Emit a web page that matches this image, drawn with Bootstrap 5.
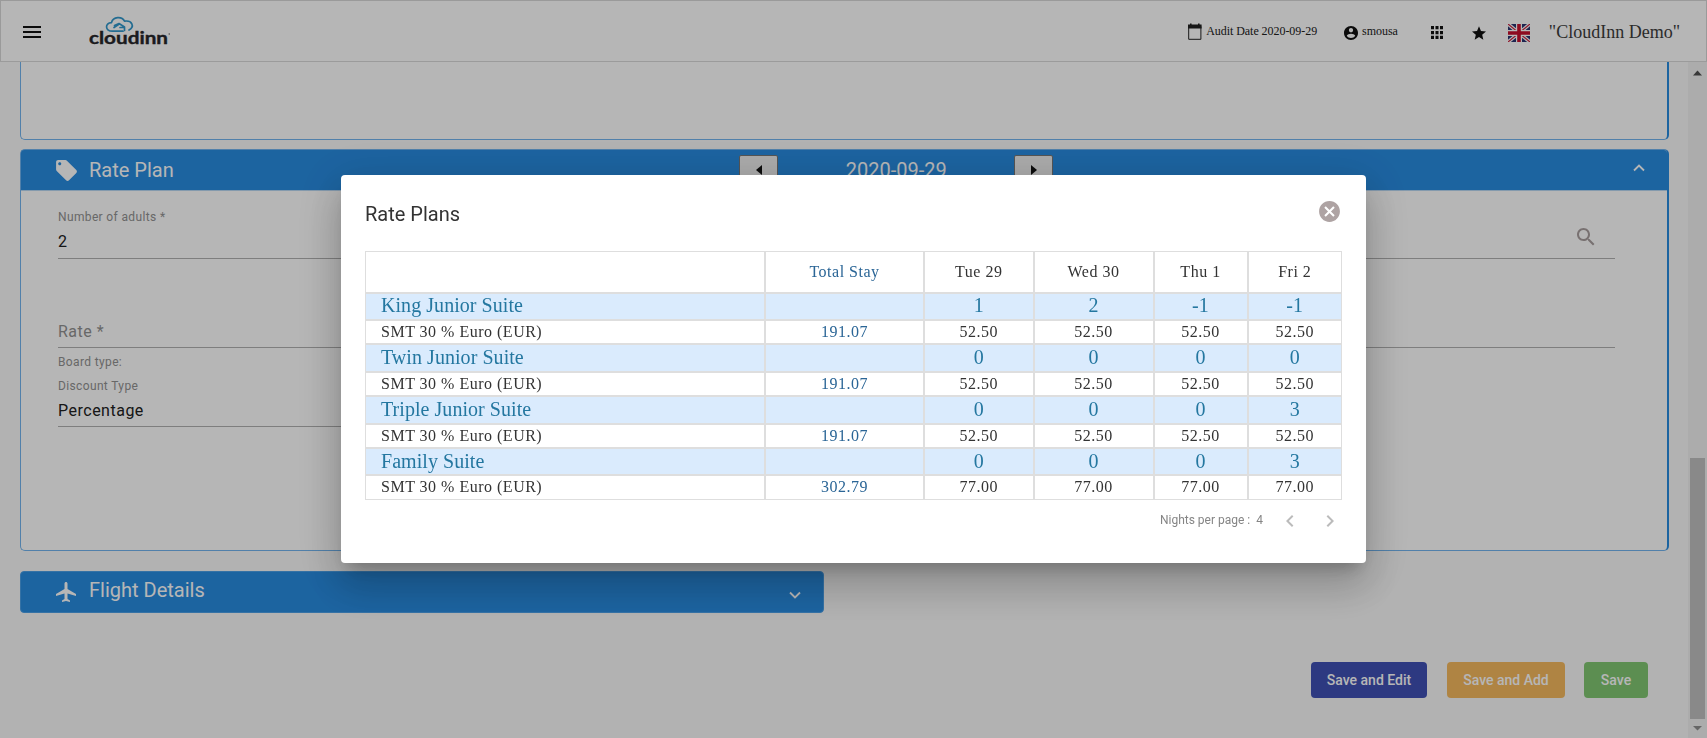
<!DOCTYPE html>
<html lang="en">
<head>
<meta charset="utf-8">
<meta name="viewport" content="width=device-width, initial-scale=1">
<title>CloudInn - Reservation</title>
<link href="https://cdn.jsdelivr.net/npm/bootstrap@5.3.0/dist/css/bootstrap.min.css" rel="stylesheet">
<style>
  body { height: 100vh; overflow: hidden; background: #fafafa; font-family: Roboto, sans-serif; color: #212121; line-height: 1.2; }
  .serif { font-family: "Liberation Serif", serif; }
  svg { display: block; flex: none; }

  .topbar { height: 62px; border: 1px solid #d8d8d8; border-bottom-color: #dadada; background: #fff; padding: 0 26px 0 19px; }
  .audit-text { font-size: 12px; letter-spacing: -.05px; }
  .hotel-name { font-size: 18px; color: #3c3c3c; padding-top: 3px; }

  .page-area { padding: 0 19px 0 20px; min-width: 0; }
  .panel { border: 1px solid #72b4ee; border-right: 2px solid #288ce1; border-radius: 5px; background: #fff; width: 1649px; }
  .panel-prev { height: 78px; border-top: 0; border-radius: 0 0 5px 5px; }
  .panel-rate { height: 402px; margin-top: 9px; }
  .panel-bar { height: 41px; background: #288ce1; color: #fff; font-size: 20px; padding: 0 20px 0 33px; border-radius: 3px 3px 0 0; border-bottom: 1px solid #b9d8f3; }
  .panel-flight { width: 804px; height: 42px; margin-top: 20px; border-radius: 4px; border: 1px solid #4ba0e8; padding: 0 16px 2px 33px; }
  .step-btn { width: 39px; height: 29px; border: 1px solid #777; border-radius: 2px; background: #efefef; padding: 0; }
  .day-label { width: 236px; }

  .fields { padding: 0 52px 0 37px; }
  .field-line { border-bottom: 1px solid #b1b1b1; }
  .cap { font-size: 12px; color: #929292; letter-spacing: .36px; line-height: 16px; }
  .val { font-size: 16px; line-height: 20px; letter-spacing: .5px; }

  .act { height: 36px; border: 0; border-radius: 4px; font-size: 14px; font-weight: 500; padding: 0; color: #fff; }
  .act-edit { width: 116px; background: #3f51b5; }
  .act-add { width: 118px; background: #f5b95f; }
  .act-save { width: 64px; background: #82c772; margin-left: -1px; }

  .rail { width: 19px; background: #f1f1f1; padding: 8px 2px 7px; }
  .rail-thumb { width: 15px; height: 261px; background: #c1c1c1; margin-bottom: 7px; }

  .shade { background: #000; --bs-backdrop-opacity: .288; }
  .dialog { width: 1025px; max-width: 1025px; margin: 0 0 0 341px; }
  .dialog-box { height: 388px; border: 0; border-radius: 4px; padding: 24px; box-shadow: 0 11px 15px -7px rgba(0,0,0,.2), 0 24px 38px 3px rgba(0,0,0,.14), 0 9px 46px 8px rgba(0,0,0,.12); }
  .dialog-title { font-size: 20px; line-height: 30px; color: #333; }
  .rates { width: 977px; table-layout: fixed; border-collapse: separate; border-spacing: 0; letter-spacing: .5px; color: #333; font-size: 16px; margin-top: 20px; }
  .rates td, .rates th { border: 1px solid #dedede; padding: 0; text-align: center; font-weight: 400; line-height: 20px; }
  .rates td:first-child { text-align: left; padding-left: 15px; }
  .rates thead tr { height: 41.5px; }
  .rates .suite { height: 27.5px; background: #daebfd; color: #2477a0; font-size: 20px; letter-spacing: .05px; }
  .rates .suite td { padding-bottom: 2px; }
  .rates .plan { height: 24.25px; }
  .rates .total { color: #2a6596; }
  .pager { font-size: 12px; color: #858585; margin-top: 9px; }
</style>
</head>
<body class="d-flex flex-column">

<nav class="topbar d-flex align-items-center justify-content-between flex-shrink-0">
  <div class="d-flex align-items-center">
    <svg style="margin-top:2px" width="24" height="24" viewBox="0 0 24 24" fill="#111"><path d="M3 18h18v-2H3v2zm0-5h18v-2H3v2zm0-7v2h18V6H3z"/></svg>
    <svg style="margin-left:45px" width="84" height="36" viewBox="0 -2 84 36">
      <g fill="none" stroke="#3198cc" stroke-width="1.7" stroke-linecap="round" stroke-linejoin="round">
        <path d="M34 16.200H23.500C16 16.200 15.500 7.800 22.500 7.600C24 1.500 33 1 35.500 6.200C43 5 46 11.500 40 15"/>
        <path d="M25.500 10.500L30 8.500L35.500 12V15.500M25 12.500L29.500 9.500M31 12.500H34"/>
      </g>
      <text x="0" y="28.700" textLength="79" lengthAdjust="spacingAndGlyphs" font-family="Lato, sans-serif" font-size="16.500" font-weight="700" fill="#26262a" stroke="#26262a" stroke-width=".35">cloudinn</text>
      <circle cx="80.200" cy="19" r=".7" fill="#555"/>
    </svg>
  </div>
  <div class="d-flex align-items-center serif">
    <svg width="16" height="18" viewBox="0 0 16 18" style="margin-top:2px"><path d="M1.700 3.500h12.200v12.800h-12.200z" fill="none" stroke="#222" stroke-width="1"/><path d="M1 1.500h13.600v4H1zM3 .5h1.600V3H3zM11 .5h1.600V3H11z" fill="#222"/></svg>
    <span class="audit-text" style="margin-left:3px">Audit Date 2020-09-29</span>
    <svg style="margin:3px 0 0 27px" width="14" height="14" viewBox="2 2 20 20" fill="#111"><path d="M12 2C6.480 2 2 6.480 2 12s4.480 10 10 10 10-4.480 10-10S17.520 2 12 2zm0 3c1.660 0 3 1.340 3 3s-1.340 3-3 3-3-1.340-3-3 1.340-3 3-3zm0 14.200c-2.500 0-4.710-1.280-6-3.220.03-1.990 4-3.080 6-3.080 1.990 0 5.970 1.090 6 3.080-1.290 1.940-3.500 3.220-6 3.220z"/></svg>
    <span class="audit-text" style="margin-left:4px">smousa</span>
    <svg style="margin:3px 0 0 33px" width="12" height="13" viewBox="0 0 12 12" preserveAspectRatio="none" fill="#111"><path d="M0 0h3v3H0zM4.500 0h3v3h-3zM9 0h3v3H9zM0 4.500h3v3H0zM4.500 4.500h3v3h-3zM9 4.500h3v3H9zM0 9h3v3H0zM4.500 9h3v3h-3zM9 9h3v3H9z"/></svg>
    <svg style="margin:3px 0 0 29px" width="14" height="14" viewBox="2 2 20 19" fill="#111"><path d="M12 17.270L18.180 21l-1.640-7.030L22 9.240l-7.190-.61L12 2 9.190 8.630 2 9.240l5.460 4.730L5.820 21z"/></svg>
    <svg style="margin:3px 0 0 22px" width="22" height="18" viewBox="0 0 22 18">
      <path fill="#2a3570" d="M0 0h22v18H0z"/>
      <path d="M0 0l22 18M22 0L0 18" stroke="#fff" stroke-width="3.600"/>
      <path d="M0 0l22 18M22 0L0 18" stroke="#c8203c" stroke-width="1.200"/>
      <path d="M11 0v18M0 9h22" stroke="#fff" stroke-width="6"/>
      <path d="M11 0v18M0 9h22" stroke="#c8102e" stroke-width="3.600"/>
    </svg>
    <span class="hotel-name" style="margin-left:19px">"CloudInn Demo"</span>
  </div>
</nav>

<div class="d-flex flex-grow-1 overflow-hidden">
  <main class="page-area flex-grow-1">
    <section class="panel panel-prev"></section>

    <section class="panel panel-rate">
      <div class="panel-bar d-flex align-items-center justify-content-between">
        <div class="d-flex align-items-center">
          <svg width="25" height="25" viewBox="0 0 24 24" fill="#fff"><path d="M21.410 11.580l-9-9C12.050 2.220 11.550 2 11 2H4c-1.100 0-2 .9-2 2v7c0 .55.220 1.050.590 1.420l9 9c.360.360.860.580 1.410.580s1.050-.220 1.410-.590l7-7c.370-.360.590-.860.590-1.410s-.230-1.060-.590-1.420zM5.500 7C4.670 7 4 6.330 4 5.500S4.670 4 5.500 4 7 4.670 7 5.500 6.330 7 5.500 7z"/></svg>
          <span style="margin-left:10px">Rate Plan</span>
        </div>
        <div class="d-flex align-items-center" style="margin:-1px 0 0 -12px">
          <button class="step-btn d-flex align-items-center justify-content-center"><svg width="6" height="10" viewBox="0 0 6 10"><path d="M6 0v10L0 5z" fill="#111"/></svg></button>
          <span class="day-label text-center">2020-09-29</span>
          <button class="step-btn d-flex align-items-center justify-content-center"><svg width="6" height="10" viewBox="0 0 6 10"><path d="M0 0v10l6-5z" fill="#111"/></svg></button>
        </div>
        <svg width="16" height="12" viewBox="0 0 16 12"><path d="M3 6.500L8 1.500l5 5" fill="none" stroke="#fff" stroke-width="1.800"/></svg>
      </div>
      <div class="fields">
        <div class="row gx-5">
          <div class="col-6"><div class="field-line" style="padding-top:18px;height:68px">
            <div class="cap">Number of adults *</div>
            <div class="val" style="margin-top:7px">2</div>
          </div></div>
          <div class="col-6"><div class="field-line d-flex justify-content-end" style="padding:34px 17px 0 0;height:68px">
            <svg width="24" height="24" viewBox="0 0 24 24" fill="#a99f9f"><path d="M15.500 14h-.79l-.28-.27C15.410 12.590 16 11.110 16 9.500 16 5.910 13.090 3 9.500 3S3 5.910 3 9.500 5.910 16 9.500 16c1.610 0 3.090-.59 4.230-1.570l.27.280v.79l5 4.990L20.490 19l-4.990-5zm-6 0C7.010 14 5 11.990 5 9.500S7.010 5 9.500 5 14 7.010 14 9.500 11.990 14 9.500 14z"/></svg>
          </div></div>
        </div>
        <div class="row gx-5">
          <div class="col-6"><div class="field-line val" style="padding-top:63px;height:89px;color:#929292">Rate *</div></div>
          <div class="col-6"><div class="field-line" style="height:89px"></div></div>
        </div>
        <div class="row gx-5">
          <div class="col-6"><div class="field-line" style="padding-top:6px;height:79px">
            <div class="cap">Board type:</div>
            <div class="cap" style="margin-top:8px">Discount Type</div>
            <div class="val" style="margin-top:7px">Percentage</div>
          </div></div>
        </div>
      </div>
    </section>

    <section class="panel-bar panel-flight d-flex align-items-center justify-content-between">
      <div class="d-flex align-items-center">
        <svg style="margin-top:2px" width="24" height="24" viewBox="0 0 24 24" fill="#fff"><path d="M22 16v-2l-8.500-5V3.500C13.500 2.670 12.830 2 12 2s-1.500.670-1.500 1.500V9L2 14v2l8.500-2.500V19L8 20.500V22l4-1 4 1v-1.500L13.500 19v-5.500z"/></svg>
        <span style="margin:-2px 0 0 11px">Flight Details</span>
      </div>
      <svg width="24" height="14" viewBox="0 0 24 14" style="margin-top:7px"><path d="M7 4.500l5 5 5-5" fill="none" stroke="#fff" stroke-width="1.800"/></svg>
    </section>

    <div class="d-flex justify-content-end" style="gap:20px;margin-top:49px;padding-right:21px">
      <button class="btn act act-edit">Save and Edit</button>
      <button class="btn act act-add">Save and Add</button>
      <button class="btn act act-save">Save</button>
    </div>
  </main>

  <div class="rail d-flex flex-column align-items-center">
    <svg width="9" height="6" viewBox="0 0 9 6"><path d="M0 5.500L4.500.5 9 5.500z" fill="#505050"/></svg>
    <div class="rail-thumb mt-auto"></div>
    <svg width="9" height="5" viewBox="0 0 9 5"><path d="M0 0h9L4.500 4.500z" fill="#909090"/></svg>
  </div>
</div>

<div class="modal-backdrop shade show"></div>
<div class="modal d-block overflow-hidden" tabindex="-1" role="dialog">
  <div class="modal-dialog modal-dialog-centered dialog min-vh-100">
    <div class="modal-content dialog-box">
      <div class="d-flex justify-content-between" style="height:32px">
        <div class="dialog-title">Rate Plans</div>
        <svg width="25" height="25" viewBox="0 0 24 24" fill="#aea3a3"><path d="M12 2C6.470 2 2 6.470 2 12s4.470 10 10 10 10-4.470 10-10S17.530 2 12 2zm5 13.590L15.590 17 12 13.410 8.410 17 7 15.590 10.590 12 7 8.410 8.410 7 12 10.590 15.590 7 17 8.410 13.410 12 17 15.590z"/></svg>
      </div>
      <table class="rates serif">
        <colgroup><col style="width:400px"><col style="width:159px"><col style="width:109.500px"><col style="width:120px"><col style="width:94px"><col style="width:94.500px"></colgroup>
        <thead><tr><th></th><th class="total">Total Stay</th><th>Tue 29</th><th>Wed 30</th><th>Thu 1</th><th>Fri 2</th></tr></thead>
        <tbody>
          <tr class="suite"><td>King Junior Suite</td><td></td><td>1</td><td>2</td><td>-1</td><td>-1</td></tr>
          <tr class="plan"><td>SMT 30 % Euro (EUR)</td><td class="total">191.07</td><td>52.50</td><td>52.50</td><td>52.50</td><td>52.50</td></tr>
          <tr class="suite"><td>Twin Junior Suite</td><td></td><td>0</td><td>0</td><td>0</td><td>0</td></tr>
          <tr class="plan"><td>SMT 30 % Euro (EUR)</td><td class="total">191.07</td><td>52.50</td><td>52.50</td><td>52.50</td><td>52.50</td></tr>
          <tr class="suite"><td>Triple Junior Suite</td><td></td><td>0</td><td>0</td><td>0</td><td>3</td></tr>
          <tr class="plan"><td>SMT 30 % Euro (EUR)</td><td class="total">191.07</td><td>52.50</td><td>52.50</td><td>52.50</td><td>52.50</td></tr>
          <tr class="suite"><td>Family Suite</td><td></td><td>0</td><td>0</td><td>0</td><td>3</td></tr>
          <tr class="plan"><td>SMT 30 % Euro (EUR)</td><td class="total">302.79</td><td>77.00</td><td>77.00</td><td>77.00</td><td>77.00</td></tr>
        </tbody>
      </table>
      <div class="pager d-flex align-items-center justify-content-end">
        <span>Nights per page :</span><span style="margin-left:6px">4</span>
        <svg style="margin-left:15px" width="24" height="24" viewBox="0 0 24 24" fill="#bbb"><path d="M15.410 7.410L14 6l-6 6 6 6 1.410-1.410L10.830 12z"/></svg>
        <svg style="margin-left:16px" width="24" height="24" viewBox="0 0 24 24" fill="#bbb"><path d="M10 6L8.590 7.410 13.170 12l-4.580 4.590L10 18l6-6z"/></svg>
      </div>
    </div>
  </div>
</div>

<script src="https://cdn.jsdelivr.net/npm/bootstrap@5.3.0/dist/js/bootstrap.bundle.min.js"></script>
</body>
</html>
